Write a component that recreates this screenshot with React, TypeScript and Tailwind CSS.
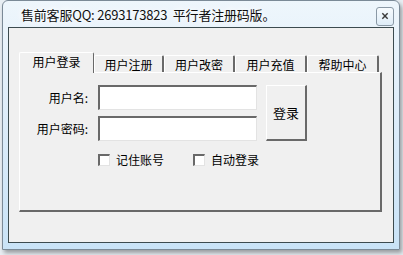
import { useState } from 'react'

const TABS = ['用户登录', '用户注册', '用户改密', '用户充值', '帮助中心']
const TAB_WIDTHS = ['w-[75px]', 'w-[70px]', 'w-[71px]', 'w-[72px]', 'w-[72px]']

export default function App() {
  const [active, setActive] = useState(0)
  const [remember, setRemember] = useState(false)
  const [autoLogin, setAutoLogin] = useState(false)

  return (
    <div className="h-[255px] w-[403px] overflow-hidden bg-[#e8eef3] font-['Noto_Sans_CJK_SC','Noto_Sans',sans-serif] text-[12px] text-black">
      <div className="ml-[2px] flex h-[250px] w-[398px] flex-col rounded-t-[6px] border border-[#7b8a97] bg-gradient-to-b from-[#eef6fc] via-[#dcecf9] to-[#c9e3f7] shadow-[2px_3px_4px_rgba(0,0,0,0.35)]">
        {/* title bar */}
        <div className="flex h-[26px] items-center justify-between pl-[18px] pr-[5px]">
          <span className="text-[13px] leading-none tracking-[-0.2px] text-[#101010] [text-shadow:0_0_6px_#ffffff,0_0_10px_#ffffff]">
            售前客服QQ: 2693173823&nbsp; 平行者注册码版。
          </span>
          <button className="mt-[4px] flex h-[19px] w-[18px] items-center justify-center rounded-[3px] border border-[#8a99a6] bg-gradient-to-b from-[#f7fbfe] to-[#dfedf8]">
            <CloseGlyph />
          </button>
        </div>

        {/* client area */}
        <div className="mx-[5px] mb-[6px] flex-1 border border-[#3c4b4f] bg-[#f0f0f0] pl-[10px] pt-[25px]">
          {/* tab strip */}
          <div className="flex h-[19px] items-end">
            {TABS.map((t, i) =>
              i === active ? (
                <button
                  key={t}
                  onClick={() => setActive(i)}
                  className={`relative z-10 -mb-px flex h-[21px] ${TAB_WIDTHS[i]} items-center justify-center rounded-t-[2px] border-l border-r border-t border-l-white border-r-[#696969] border-t-white bg-[#f0f0f0] pb-[2px] leading-none`}
                >
                  {t}
                </button>
              ) : (
                <button
                  key={t}
                  onClick={() => setActive(i)}
                  className={`flex h-[17px] ${TAB_WIDTHS[i]} items-center justify-center rounded-t-[2px] border-l border-r-2 border-t border-l-white border-r-[#696969] border-t-white bg-[#f0f0f0] pt-[2px] leading-none`}
                >
                  {t}
                </button>
              ),
            )}
          </div>

          {/* pane */}
          <div className="h-[140px] w-[363px] border-b-2 border-l border-r-2 border-t border-b-[#696969] border-l-white border-r-[#696969] border-t-white pl-[14px] pt-[12px]">
            <div className="flex gap-[9px]">
              <div className="flex flex-col gap-[6px]">
                <Field label="用户名:" />
                <Field label="用户密码:" />
              </div>
              <button className="h-[56px] w-[41px] border-b-2 border-l border-r-2 border-t border-b-[#696969] border-l-white border-r-[#696969] border-t-white bg-[#f0f0f0] text-[13px]">
                登录
              </button>
            </div>

            <div className="mt-[13px] flex items-center pl-[64px]">
              <Check label="记住账号" checked={remember} onChange={setRemember} />
              <div className="w-[29px]" />
              <Check label="自动登录" checked={autoLogin} onChange={setAutoLogin} />
            </div>
          </div>
        </div>
      </div>
    </div>
  )
}

function Field({ label }: { label: string }) {
  return (
    <div className="flex items-center">
      <span className="w-[54px] whitespace-nowrap text-right leading-none">{label}</span>
      <div className="ml-[10px] h-[25px] w-[159px] border-b border-l-2 border-r border-t-2 border-b-[#e3e3e3] border-l-[#696969] border-r-[#e3e3e3] border-t-[#696969] bg-white" />
    </div>
  )
}

function Check({
  label,
  checked,
  onChange,
}: {
  label: string
  checked: boolean
  onChange: (v: boolean) => void
}) {
  return (
    <label className="flex cursor-default items-center gap-[6px]" onClick={() => onChange(!checked)}>
      <span className="flex h-[12px] w-[12px] items-center justify-center border-b border-l-2 border-r border-t-2 border-b-[#e3e3e3] border-l-[#696969] border-r-[#e3e3e3] border-t-[#696969] bg-white text-[9px] leading-none">
        {checked ? '✓' : ''}
      </span>
      <span className="leading-none">{label}</span>
    </label>
  )
}

function CloseGlyph() {
  return (
    <svg viewBox="0 0 9 9" className="h-[8px] w-[8px]" fill="none" stroke="#3a3a3a" strokeWidth="1.6">
      <path d="M1.5 1.5 L7.5 7.5 M7.5 1.5 L1.5 7.5" />
    </svg>
  )
}
